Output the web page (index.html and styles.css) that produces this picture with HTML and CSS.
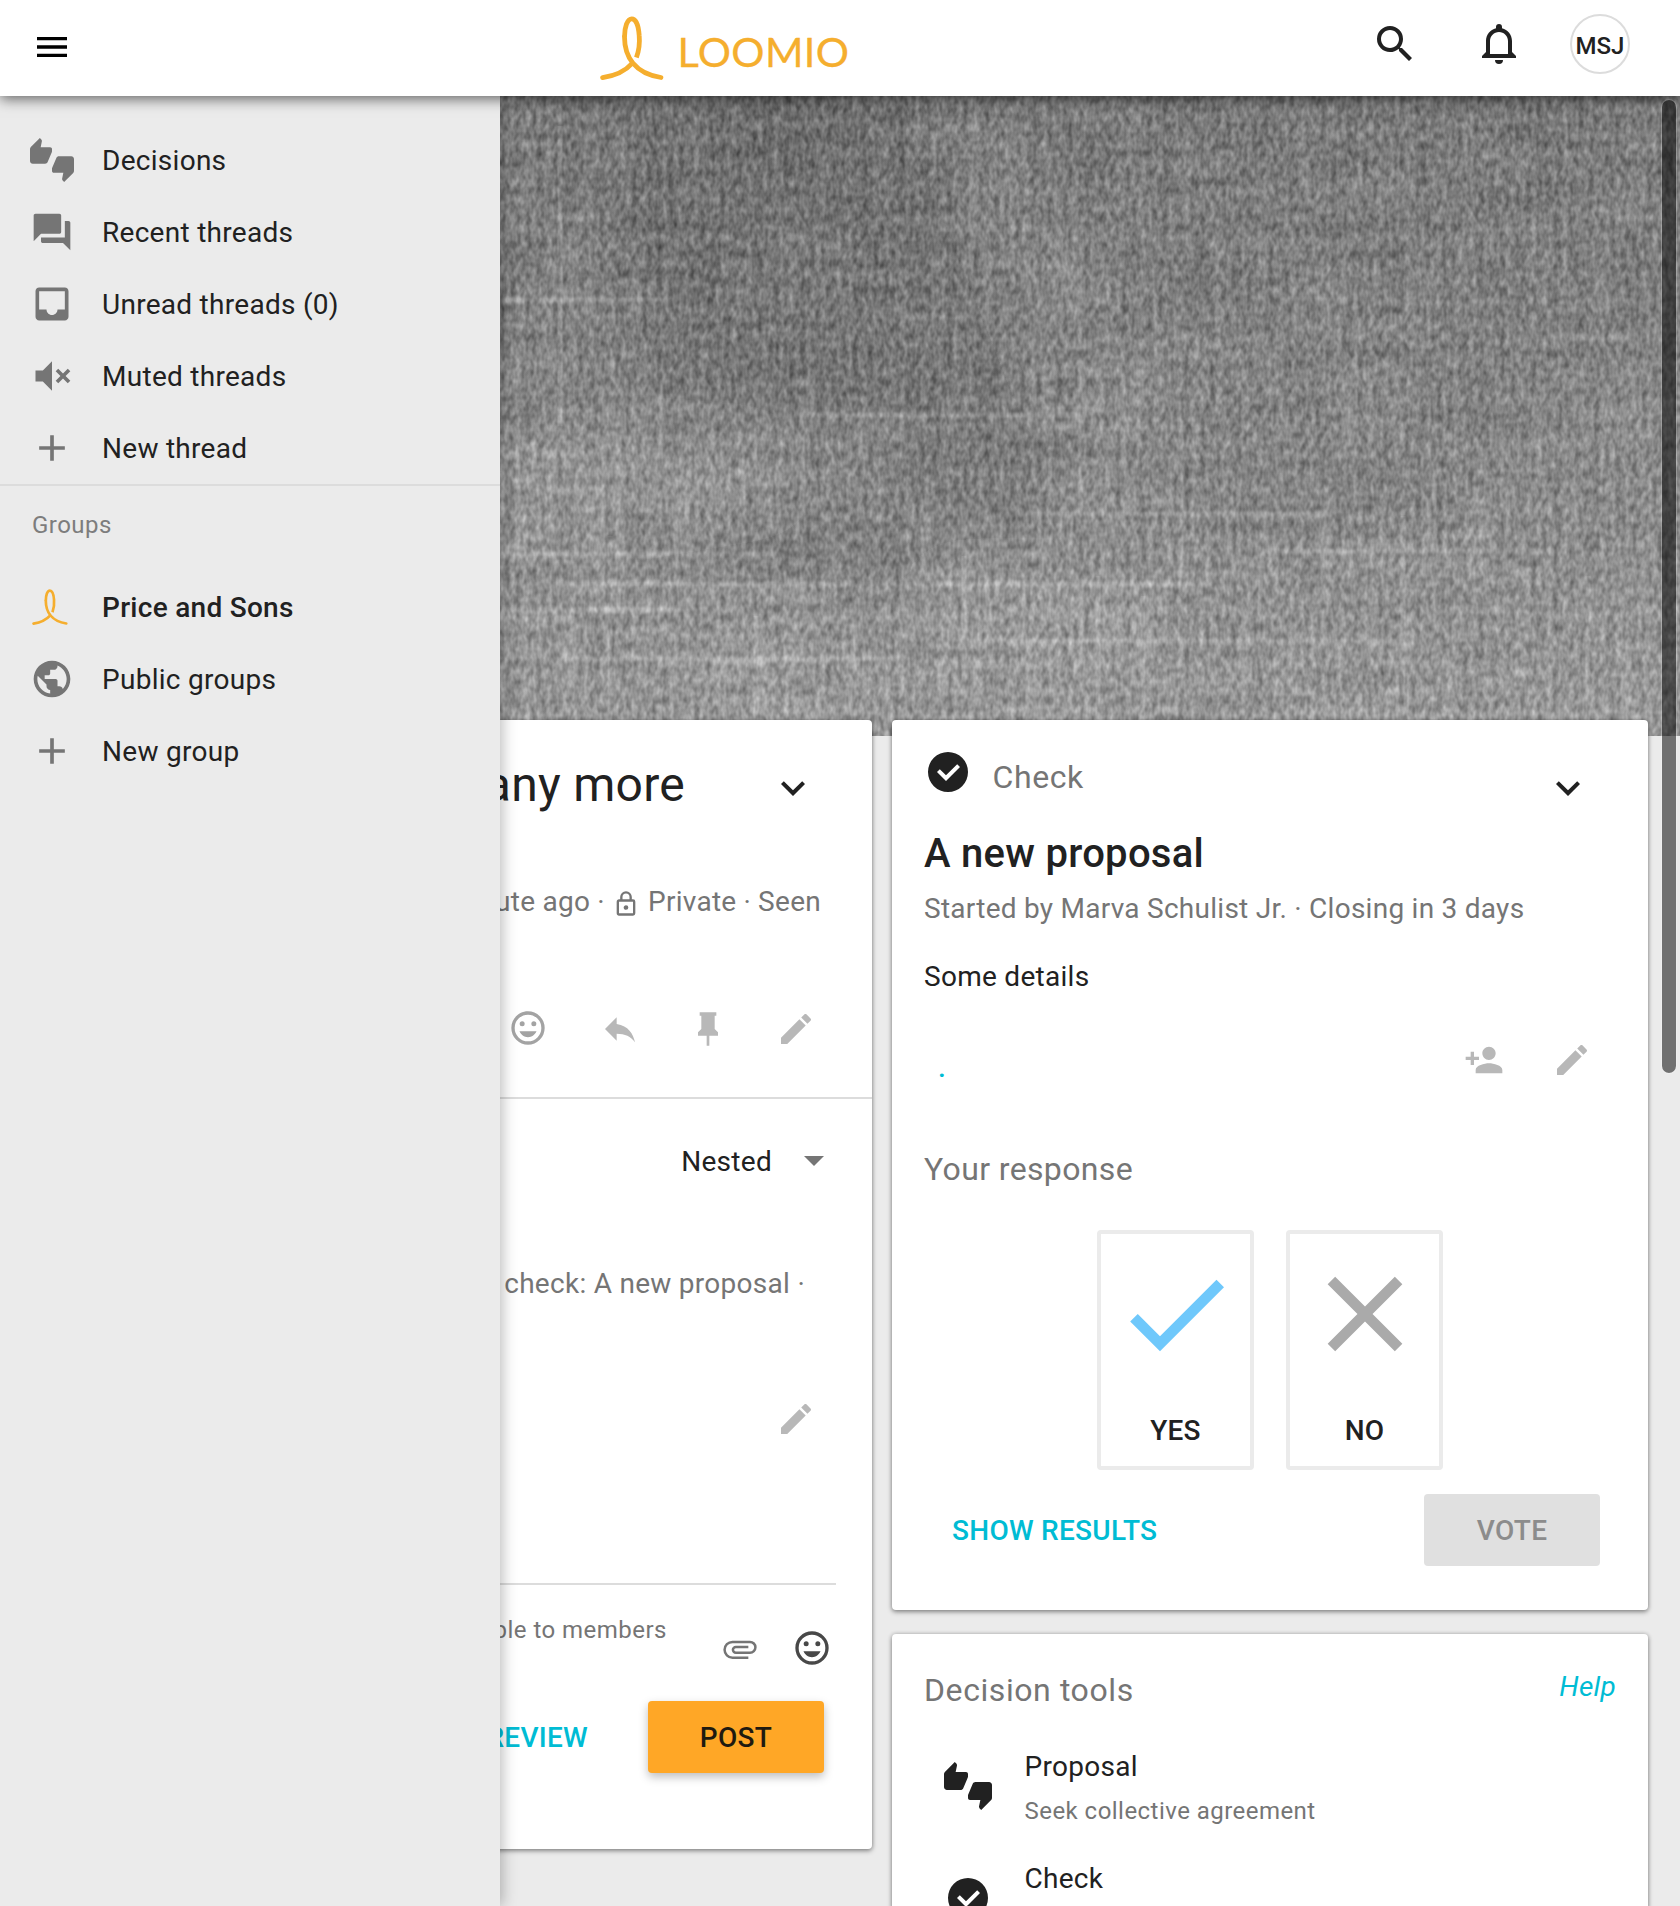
FILE: index.html
```html
<!DOCTYPE html>
<html lang="en">
<head>
<meta charset="utf-8">
<title>Loomio</title>
<link rel="stylesheet" href="styles.css">
</head>
<body>
<svg class="sprite" aria-hidden="true">
  <symbol id="i-thumbs" viewBox="0 0 24 24"><path d="M12 6c0-.55-.45-1-1-1H5.82l.66-3.18.02-.23c0-.31-.13-.59-.33-.8L5.38 0 .44 4.94C.17 5.21 0 5.59 0 6v6.5c0 .83.67 1.5 1.5 1.5h6.75c.62 0 1.15-.38 1.38-.91l2.26-5.29c.07-.17.11-.36.11-.55V6zm10.5 4h-6.75c-.62 0-1.15.38-1.38.91l-2.26 5.29c-.07.17-.11.36-.11.55V18c0 .55.45 1 1 1h5.18l-.66 3.18-.02.24c0 .31.13.59.33.8l.79.78 4.94-4.94c.27-.27.44-.65.44-1.06v-6.5c0-.83-.67-1.5-1.5-1.5z"/></symbol>
  <symbol id="i-forum" viewBox="0 0 24 24"><path d="M21 6h-2v9H6v2c0 .55.45 1 1 1h11l4 4V7c0-.55-.45-1-1-1zm-4 6V3c0-.55-.45-1-1-1H3c-.55 0-1 .45-1 1v14l4-4h10c.55 0 1-.45 1-1z"/></symbol>
  <symbol id="i-inbox" viewBox="0 0 24 24"><path d="M19 3H4.99c-1.11 0-1.98.9-1.98 2L3 19c0 1.1.88 2 1.99 2H19c1.1 0 2-.9 2-2V5c0-1.1-.9-2-2-2zm0 12h-4c0 1.66-1.35 3-3 3s-3-1.34-3-3H4.99V5H19v10z"/></symbol>
  <symbol id="i-mute" viewBox="0 0 24 24"><path d="M3,9H7L12,4V20L7,15H3V9M16.59,12L14,9.41L15.41,8L18,10.59L20.59,8L22,9.41L19.41,12L22,14.59L20.59,16L18,13.41L15.41,16L14,14.59L16.59,12Z"/></symbol>
  <symbol id="i-plus" viewBox="0 0 24 24"><path d="M19 13h-6v6h-2v-6H5v-2h6V5h2v6h6v2z"/></symbol>
  <symbol id="i-earth" viewBox="0 0 24 24"><path d="M12 2C6.48 2 2 6.48 2 12s4.48 10 10 10 10-4.48 10-10S17.52 2 12 2zm-1 17.93c-3.95-.49-7-3.85-7-7.93 0-.62.08-1.21.21-1.79L9 15v1c0 1.1.9 2 2 2v1.93zm6.9-2.54c-.26-.81-1-1.39-1.9-1.39h-1v-3c0-.55-.45-1-1-1H8v-2h2c.55 0 1-.45 1-1V7h2c1.1 0 2-.9 2-2v-.41c2.93 1.19 5 4.06 5 7.41 0 2.08-.8 3.97-2.1 5.39z"/></symbol>
  <symbol id="i-menu" viewBox="0 0 24 24"><path d="M3 18h18v-2H3v2zm0-5h18v-2H3v2zm0-7v2h18V6H3z"/></symbol>
  <symbol id="i-search" viewBox="0 0 24 24"><path d="M9.5,3A6.5,6.5 0 0,1 16,9.5C16,11.11 15.41,12.59 14.44,13.73L14.71,14H15.5L20.5,19L19,20.5L14,15.5V14.71L13.73,14.44C12.59,15.41 11.11,16 9.5,16A6.5,6.5 0 0,1 3,9.5A6.5,6.5 0 0,1 9.5,3M9.5,5C7,5 5,7 5,9.5C5,12 7,14 9.5,14C12,14 14,12 14,9.5C14,7 12,5 9.5,5Z"/></symbol>
  <symbol id="i-bell" viewBox="0 0 24 24"><path d="M16,17H7V10.5C7,8 9,6 11.5,6C14,6 16,8 16,10.5M18,16V10.5C18,7.43 15.86,4.86 13,4.18V3.5A1.5,1.5 0 0,0 11.5,2A1.5,1.5 0 0,0 10,3.5V4.18C7.13,4.86 5,7.43 5,10.5V16L3,18V19H20V18M11.5,22A2,2 0 0,0 13.5,20H9.5A2,2 0 0,0 11.5,22Z"/></symbol>
  <symbol id="i-smile" viewBox="0 0 24 24"><path d="M12,17.5C14.33,17.5 16.3,16.04 17.11,14H6.89C7.69,16.04 9.67,17.5 12,17.5M8.5,11A1.5,1.5 0 0,0 10,9.5A1.5,1.5 0 0,0 8.5,8A1.5,1.5 0 0,0 7,9.5A1.5,1.5 0 0,0 8.5,11M15.5,11A1.5,1.5 0 0,0 17,9.5A1.5,1.5 0 0,0 15.5,8A1.5,1.5 0 0,0 14,9.5A1.5,1.5 0 0,0 15.5,11M12,20A8,8 0 0,1 4,12A8,8 0 0,1 12,4A8,8 0 0,1 20,12A8,8 0 0,1 12,20M12,2C6.47,2 2,6.5 2,12A10,10 0 0,0 12,22A10,10 0 0,0 22,12A10,10 0 0,0 12,2Z"/></symbol>
  <symbol id="i-reply" viewBox="0 0 24 24"><path d="M10 9V5l-7 7 7 7v-4.1c5 0 8.5 1.6 11 5.1-1-5-4-10-11-11z"/></symbol>
  <symbol id="i-pin" viewBox="0 0 24 24"><path d="M16,12V4H17V2H7V4H8V12L6,14V16H11.2V22H12.8V16H18V14L16,12Z"/></symbol>
  <symbol id="i-edit" viewBox="0 0 24 24"><path d="M3 17.25V21h3.75L17.81 9.94l-3.75-3.75L3 17.25zM20.71 7.04c.39-.39.39-1.02 0-1.41l-2.34-2.34c-.39-.39-1.02-.39-1.41 0l-1.83 1.83 3.75 3.75 1.83-1.83z"/></symbol>
  <symbol id="i-lock" viewBox="0 0 24 24"><path d="M12,17C10.89,17 10,16.1 10,15C10,13.89 10.89,13 12,13A2,2 0 0,1 14,15A2,2 0 0,1 12,17M18,20V10H6V20H18M18,8A2,2 0 0,1 20,10V20A2,2 0 0,1 18,22H6C4.89,22 4,21.1 4,20V10C4,8.89 4.89,8 6,8H7V6A5,5 0 0,1 12,1A5,5 0 0,1 17,6V8H18M12,3A3,3 0 0,0 9,6V8H15V6A3,3 0 0,0 12,3Z"/></symbol>
  <symbol id="i-clip" viewBox="0 0 24 24"><path d="M7.5,18A5.5,5.5 0 0,1 2,12.5A5.5,5.5 0 0,1 7.5,7H18A4,4 0 0,1 22,11A4,4 0 0,1 18,15H9.5A2.5,2.5 0 0,1 7,12.5A2.5,2.5 0 0,1 9.5,10H17V11.5H9.5A1,1 0 0,0 8.5,12.5A1,1 0 0,0 9.5,13.5H18A2.5,2.5 0 0,0 20.5,11A2.5,2.5 0 0,0 18,8.5H7.5A4,4 0 0,0 3.5,12.5A4,4 0 0,0 7.5,16.5H17V18H7.5Z"/></symbol>
  <symbol id="i-invite" viewBox="0 0 24 24"><path d="M15 12c2.21 0 4-1.79 4-4s-1.79-4-4-4-4 1.79-4 4 1.79 4 4 4zm-9-2V7H4v3H1v2h3v3h2v-3h3v-2H6zm9 4c-2.67 0-8 1.34-8 4v2h16v-2c0-2.66-5.33-4-8-4z"/></symbol>
  <symbol id="i-down" viewBox="0 0 24 24"><path d="M7.41 8.59L12 13.17l4.59-4.58L18 10l-6 6-6-6 1.41-1.41z"/></symbol>
  <symbol id="i-check-circle" viewBox="0 0 24 24"><path fill-rule="evenodd" d="M12,2A10,10 0 1,1 12,22A10,10 0 1,1 12,2ZM11,16.5L18,9.5L16.59,8.09L11,13.67L7.91,10.59L6.5,12L11,16.5Z"/></symbol>
  <symbol id="i-tick" viewBox="0 0 24 24"><path d="M9 16.17L4.83 12l-1.42 1.41L9 19 21 7l-1.41-1.41z"/></symbol>
  <symbol id="i-cross" viewBox="0 0 24 24"><path d="M19 6.41L17.59 5 12 10.59 6.41 5 5 6.41 10.59 12 5 17.59 6.41 19 12 13.41 17.59 19 19 17.59 13.41 12z"/></symbol>
  <symbol id="i-loop" viewBox="0 0 64 66"><g fill="none" stroke="#f5ae2e" stroke-width="4.8" stroke-linecap="round"><path stroke-linecap="butt" d="M36.4 41.5C39.2 34 39.7 25 39.2 19.5C38.5 9 35.6 2.8 31.8 2.8C27.3 2.8 24.5 11 24.5 21"/><path d="M24.5 21C24.5 41 35 57.5 61 61.5"/><path d="M2.6 61.7C13 60 25 55.5 32 47.5"/></g></symbol>
</svg>

<header class="topbar">
  <svg class="icon-40"><use href="#i-menu"/></svg>
  <div class="brand">
    <svg class="brand-mark"><use href="#i-loop"/></svg>
    <svg class="brand-name" viewBox="0 0 172 48"><text x="-.5" y="39.5" textLength="171.5" lengthAdjust="spacing">LOOMIO</text></svg>
  </div>
  <div class="tools">
    <svg class="icon-48"><use href="#i-search"/></svg>
    <svg class="icon-48"><use href="#i-bell"/></svg>
    <div class="avatar">MSJ</div>
  </div>
</header>

<div class="page">
  <div class="cover">
    <svg class="fabric" width="1680" height="640">
      <defs>
        <linearGradient id="tone" x1="0" y1="0" x2="0" y2="1">
          <stop offset="0" stop-color="#787878"/>
          <stop offset=".45" stop-color="#838383"/>
          <stop offset="1" stop-color="#989898"/>
        </linearGradient>
        <filter id="soft" x="-30%" y="-30%" width="160%" height="160%"><feGaussianBlur stdDeviation="22"/></filter>
        <filter id="fray" x="-5%" y="-5%" width="110%" height="110%"><feGaussianBlur stdDeviation="7 1.5"/></filter>
        <filter id="weave" x="0" y="0" width="100%" height="100%" color-interpolation-filters="sRGB">
          <feTurbulence type="fractalNoise" baseFrequency="0.19 0.11" numOctaves="2" seed="4"/>
          <feColorMatrix values="1 0 0 0 0 1 0 0 0 0 1 0 0 0 0 0 0 0 0 1" result="grain"/>
          <feTurbulence type="fractalNoise" baseFrequency="0.13 0.008" numOctaves="2" seed="9"/>
          <feColorMatrix values="1 0 0 0 0 1 0 0 0 0 1 0 0 0 0 0 0 0 0 1" result="warp"/>
          <feTurbulence type="fractalNoise" baseFrequency="0.007 0.08" numOctaves="2" seed="21"/>
          <feColorMatrix values="1 0 0 0 0 1 0 0 0 0 1 0 0 0 0 0 0 0 0 1" result="weft"/>
          <feComposite in="warp" in2="weft" operator="arithmetic" k2=".55" k3=".45" result="threads"/>
          <feComposite in="grain" in2="threads" operator="arithmetic" k2=".6" k3=".4" result="cloth"/>
          <feComposite in="SourceGraphic" in2="cloth" operator="arithmetic" k2="1" k3=".66" k4="-.325"/>
        </filter>
      </defs>
      <g filter="url(#weave)">
        <rect width="1680" height="640" fill="url(#tone)"/>
        <g filter="url(#soft)">
          <path fill="#000" fill-opacity=".09" d="M620 0L915 0L960 140L1030 280L1060 430L900 500L640 470L620 430L900 400L880 330L640 290Z"/>
          <path fill="#fff" fill-opacity=".09" d="M500 330L760 350L780 400L600 430L500 450Z"/>
          <path fill="#000" fill-opacity=".07" d="M1180 380L1440 380L1460 430L1220 440Z"/>
          <path fill="#fff" fill-opacity=".04" d="M930 0L1000 0L1200 330L1060 330Z"/>
          <path fill="#fff" fill-opacity=".06" d="M940 480L1180 480L1180 540L930 560Z"/>
        </g>
        <g fill="none" stroke="#fff" stroke-opacity=".2" stroke-width="5" filter="url(#fray)">
          <path d="M500 458H780M560 488H850M940 488H1200M500 514H700M1020 418H1330M1260 455H1560M800 319H1090M500 204H670M560 563H900M960 545H1400"/>
        </g>
        <g fill="none" stroke="#fff" stroke-opacity=".11" stroke-width="5">
          <path d="M610 440V640M964 460V640M1098 480V640M1143 500V640M1403 420V640M756 520V640M560 30V330M1588 480V640"/>
        </g>
      </g>
    </svg>
  </div>

  <div class="columns">
    <section class="card thread">
      <div class="thread-title"><h1>any more</h1><svg class="icon-48"><use href="#i-down"/></svg></div>
      <div class="thread-meta"><span>minute ago</span><span>·</span><svg class="lock"><use href="#i-lock"/></svg><span>Private</span><span>·</span><span>Seen</span></div>
      <div class="thread-actions">
        <svg class="icon-40 smile"><use href="#i-smile"/></svg>
        <svg class="icon-40"><use href="#i-reply"/></svg>
        <svg class="icon-40"><use href="#i-pin"/></svg>
        <svg class="icon-40"><use href="#i-edit"/></svg>
      </div>
      <div class="sorter"><span>Nested</span><i class="caret"></i></div>
      <div class="event">check: A new proposal ·</div>
      <div class="event-actions"><svg class="icon-40"><use href="#i-edit"/></svg></div>
      <div class="composer">
        <span>visible to members</span>
        <svg class="icon-40 clip"><use href="#i-clip"/></svg>
        <svg class="icon-40 face"><use href="#i-smile"/></svg>
      </div>
      <div class="composer-buttons"><a class="link">PREVIEW</a><button class="btn primary">POST</button></div>
    </section>

    <div class="side">
      <section class="card poll">
        <div class="poll-head">
          <svg class="icon-48"><use href="#i-check-circle"/></svg>
          <span>Check</span>
          <svg class="icon-48 toggle"><use href="#i-down"/></svg>
        </div>
        <h2>A new proposal</h2>
        <p class="byline">Started by Marva Schulist Jr. · Closing in 3 days</p>
        <p class="details">Some details</p>
        <div class="poll-actions">
          <a class="translate">.</a>
          <svg class="icon-40"><use href="#i-invite"/></svg>
          <svg class="icon-40"><use href="#i-edit"/></svg>
        </div>
        <h3>Your response</h3>
        <div class="choices">
          <div class="choice yes"><svg><use href="#i-tick"/></svg><b>YES</b></div>
          <div class="choice no"><svg><use href="#i-cross"/></svg><b>NO</b></div>
        </div>
        <div class="poll-buttons"><a class="link">SHOW RESULTS</a><button class="btn disabled">VOTE</button></div>
      </section>

      <section class="card decide">
        <div class="decide-head"><h3>Decision tools</h3><a>Help</a></div>
        <div class="tool"><svg class="icon-48"><use href="#i-thumbs"/></svg><div><p>Proposal</p><small>Seek collective agreement</small></div></div>
        <div class="tool"><svg class="icon-48"><use href="#i-check-circle"/></svg><div><p>Check</p></div></div>
      </section>
    </div>
  </div>

  <div class="scrollbar"></div>
</div>

<nav class="drawer">
  <a class="item"><svg><use href="#i-thumbs"/></svg>Decisions</a>
  <a class="item"><svg><use href="#i-forum"/></svg>Recent threads</a>
  <a class="item"><svg><use href="#i-inbox"/></svg>Unread threads (0)</a>
  <a class="item"><svg><use href="#i-mute"/></svg>Muted threads</a>
  <a class="item"><svg><use href="#i-plus"/></svg>New thread</a>
  <div class="heading">Groups</div>
  <a class="item current"><svg class="group-logo"><use href="#i-loop"/></svg>Price and Sons</a>
  <a class="item"><svg><use href="#i-earth"/></svg>Public groups</a>
  <a class="item"><svg><use href="#i-plus"/></svg>New group</a>
</nav>
</body>
</html>
```
FILE: styles.css
```css
* { box-sizing: border-box; }
body {
  margin: 0;
  position: relative;
  height: 1906px;
  overflow: hidden;
  background: #ebebeb;
  color: #212121;
  font-family: Roboto, "Liberation Sans", sans-serif;
  font-size: 28px;
  letter-spacing: .01em;
}
h1, h2, h3, p { margin: 0; font-weight: 400; }
svg { display: block; flex: none; fill: currentColor; }
.sprite { display: none; }
.icon-40 { width: 40px; height: 40px; }
.icon-48 { width: 48px; height: 48px; }

/* top bar */
.topbar {
  position: relative;
  z-index: 3;
  display: flex;
  align-items: flex-start;
  height: 96px;
  padding: 27px 50px 0 32px;
  background: #fff;
  color: #000;
  box-shadow: 0 3px 13px rgba(0, 0, 0, .58);
}
.brand { display: flex; align-items: flex-start; margin: -11px 0 0 528px; }
.brand-mark { width: 64px; height: 66px; }
.brand-name { width: 172px; height: 48px; margin: 11px 0 0 14px; fill: #f5ae2e; overflow: visible; }
.brand-name text {
  font: 400 41.5px Lato, sans-serif;
  letter-spacing: 0;
  stroke: #f5ae2e;
  stroke-width: .3;
  stroke-linejoin: round;
}
.tools { display: flex; margin: -7px 0 0 auto; color: #212121; }
.tools .icon-48 + .icon-48 { margin-left: 57px; }
.avatar {
  width: 60px;
  height: 60px;
  margin: -6px 0 0 46px;
  border: 2px solid #dcdcdc;
  border-radius: 50%;
  font-size: 24px;
  font-weight: 500;
  line-height: 60px;
  text-align: center;
  letter-spacing: 0;
}

/* drawer */
.drawer {
  position: absolute;
  z-index: 2;
  top: 96px;
  left: 0;
  width: 500px;
  height: 1810px;
  padding-top: 28px;
  background: #ebebeb;
  box-shadow: 2px 0 14px rgba(0, 0, 0, .28);
}
.item { display: flex; align-items: center; height: 72px; padding-left: 30px; gap: 28px; }
.item svg { width: 44px; height: 44px; color: #757575; }
.item .group-logo { width: 40px; height: 37px; margin: 0 4px 0 0; }
.current { font-weight: 500; }
.heading {
  height: 87px;
  padding: 21px 32px 0;
  border-top: 2px solid #dcdcdc;
  color: #7d7d7d;
  font-size: 24px;
  line-height: 36px;
  letter-spacing: .02em;
}

/* page behind the drawer */
.page { position: relative; height: 1810px; overflow: hidden; }
.cover { height: 640px; overflow: hidden; }
.columns { display: flex; align-items: flex-start; gap: 20px; margin-top: -16px; padding: 0 32px; position: relative; }
.card { background: #fff; border-radius: 4px; box-shadow: 0 2px 5px rgba(0, 0, 0, .38), 0 0 4px rgba(0, 0, 0, .2); }
.thread { width: 840px; height: 1129px; padding-top: 20px; }
.side { flex: 1; display: flex; flex-direction: column; gap: 24px; }

.thread-title { display: flex; justify-content: flex-end; align-items: center; height: 88px; gap: 84px; padding-right: 55px; }
.thread-title h1 { font-size: 48px; }
.thread-title svg { margin-top: 8px; }
.thread-meta { display: flex; justify-content: flex-end; align-items: center; height: 44px; margin-top: 51px; padding-right: 51px; color: #757575; }
.thread-meta span + span { margin-left: 7px; }
.lock { width: 28px; height: 28px; margin: 5px 8px 0 7px; }
.thread-actions, .event-actions { display: flex; justify-content: flex-end; gap: 48px; padding-right: 56px; color: #b8b8b8; }
.thread-actions { padding-top: 86px; padding-bottom: 48px; border-bottom: 2px solid #dcdcdc; }
.thread-actions .smile { margin: -1px 4px 0 0; color: #a3a3a3; }
.sorter { display: flex; justify-content: flex-end; align-items: center; height: 44px; margin-top: 40px; gap: 32px; padding-right: 48px; }
.caret { border: 10px solid transparent; border-top-color: #757575; border-bottom: 0; }
.event { margin-top: 79px; padding-right: 67px; line-height: 44px; text-align: right; color: #757575; }
.event-actions { margin-top: 93px; }
.composer {
  display: flex;
  align-items: flex-start;
  justify-content: flex-end;
  margin: 144px 36px 0 36px;
  padding: 27px 4px 0 0;
  border-top: 2px solid #dcdcdc;
  color: #757575;
  font-size: 24px;
  line-height: 36px;
  letter-spacing: .02em;
}
.composer .clip { margin: 17px 0 0 53px; }
.composer .face { margin: 16px 0 0 32px; color: #484848; }
.composer-buttons { display: flex; justify-content: flex-end; align-items: center; gap: 60px; margin-top: 32px; padding-right: 48px; }
.link { color: #00bcd4; font-weight: 500; }
.btn {
  width: 176px;
  height: 72px;
  border: 0;
  border-radius: 4px;
  font: 500 28px Roboto, sans-serif;
  letter-spacing: .01em;
}
.primary { background: #ffa726; color: #1f1a10; box-shadow: 0 4px 10px rgba(0, 0, 0, .26); }
.disabled { background: #e0e0e0; color: #8c8c8c; }

.poll { height: 890px; padding: 28px 32px 0; }
.poll-head { display: flex; align-items: flex-start; height: 64px; font-size: 32px; line-height: 48px; }
.poll-head span { margin: 5px 0 0 20.5px; color: #757575; letter-spacing: .6px; }
.toggle { margin: 16px 24px 0 auto; }
.poll h2 { margin-top: 18px; font-size: 40px; line-height: 48px; font-weight: 500; }
.byline { margin-top: 13px; line-height: 36px; color: #757575; white-space: nowrap; letter-spacing: .26px; }
.details { margin-top: 32px; line-height: 36px; }
.poll-actions { display: flex; margin-top: 45px; padding-right: 24px; gap: 48px; color: #b8b8b8; }
.translate { margin: 8px auto 0 14px; line-height: 40px; height: 32px; color: #00bcd4; font-weight: 500; }
h3 { font-size: 32px; line-height: 40px; color: #757575; }
.poll h3 { margin-top: 69px; letter-spacing: .37px; }
.choices { display: flex; justify-content: center; gap: 32px; margin-top: 41px; }
.choice {
  display: flex;
  flex-direction: column;
  align-items: center;
  width: 157px;
  height: 240px;
  padding-top: 16px;
  border: 4px solid #ebebeb;
  border-radius: 4px;
}
.choice svg { width: 128px; height: 128px; }
.choice b { margin-top: 35px; font-weight: 500; line-height: 36px; }
.yes svg { color: #6fc8fb; }
.no svg { color: #aaa; }
.poll-buttons { display: flex; justify-content: space-between; align-items: center; margin-top: 24px; padding: 0 16px 0 28px; }

.decide { height: 276px; padding: 36px 32px 0; }
.decide-head { display: flex; justify-content: space-between; margin-bottom: 20px; }
.decide-head h3 { letter-spacing: .58px; }
.decide-head a { margin-top: -1px; line-height: 36px; font-style: italic; color: #00bcd4; }
.tool { display: flex; height: 112px; padding: 19px 0 0 20px; }
.tool svg { margin: 13px 32.5px 0 0; }
.tool p { line-height: 36px; }
.tool small { display: block; margin-top: 8px; font-size: 24px; line-height: 36px; color: #757575; letter-spacing: .46px; }

.scrollbar {
  position: absolute;
  top: 3px;
  right: 3px;
  width: 16px;
  height: 975px;
  border: 1px solid rgba(255, 255, 255, .2);
  border-radius: 8px;
  background: rgba(0, 0, 0, .52);
  background-clip: padding-box;
}
```
